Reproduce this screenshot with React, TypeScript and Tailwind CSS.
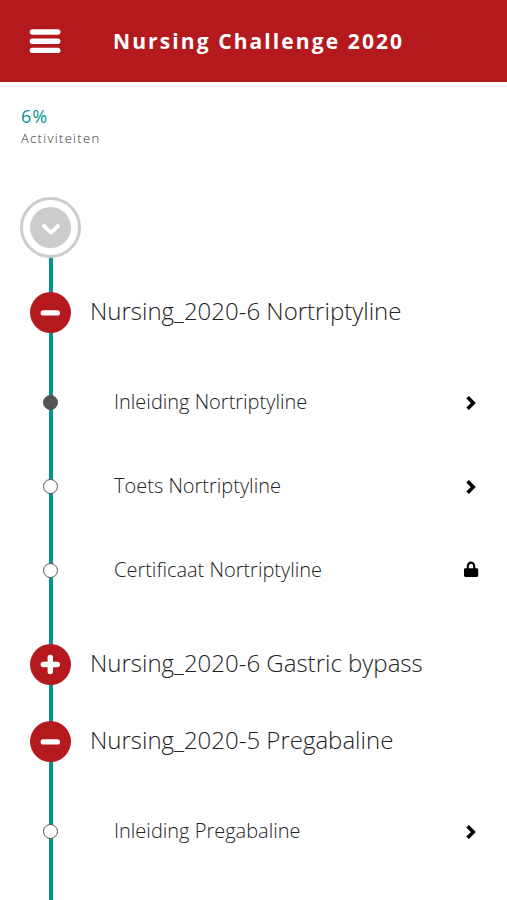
import { useState } from "react"

type ItemState = "current" | "open" | "locked"

interface Item {
  title: string
  state: ItemState
}

interface Chapter {
  title: string
  expanded: boolean
  items: Item[]
}

const initialChapters: Chapter[] = [
  {
    title: "Nursing_2020-6 Nortriptyline",
    expanded: true,
    items: [
      { title: "Inleiding Nortriptyline", state: "current" },
      { title: "Toets Nortriptyline", state: "open" },
      { title: "Certificaat Nortriptyline", state: "locked" },
    ],
  },
  { title: "Nursing_2020-6 Gastric bypass", expanded: false, items: [] },
  {
    title: "Nursing_2020-5 Pregabaline",
    expanded: true,
    items: [{ title: "Inleiding Pregabaline", state: "open" }],
  },
]

function MenuIcon() {
  return (
    <svg width="32" height="26" viewBox="0 0 32 26" stroke="white" strokeWidth="5.4" strokeLinecap="round" aria-hidden="true">
      <path d="M3.4 4h25.4M3.4 13.2h25.4M3.4 22.4h25.4" />
    </svg>
  )
}

function ToggleIcon({ expanded }: { expanded: boolean }) {
  return (
    <svg width="41" height="41" viewBox="0 0 41 41" fill="none" stroke="white" strokeWidth="5.4" strokeLinecap="round" aria-hidden="true">
      <path d={expanded ? "M13.3 20.9h14" : "M13.3 20.5h14M20.3 13.5v14"} />
    </svg>
  )
}

function ChevronIcon() {
  return (
    <svg width="16" height="18" viewBox="0 0 16 18" fill="none" stroke="black" strokeWidth="3.6" aria-hidden="true">
      <path d="M4.6 4.2l5.7 5.8-5.7 5.8" />
    </svg>
  )
}

function LockIcon() {
  return (
    <svg width="16" height="18" viewBox="0 0 16 18" aria-hidden="true">
      <path d="M4.8 9V5.4a3.2 3.8 0 0 1 6.4 0V9" fill="none" stroke="black" strokeWidth="2.1" />
      <rect x="1" y="7.2" width="14.2" height="8.8" rx="1.4" />
    </svg>
  )
}

function ItemRow({ item }: { item: Item }) {
  return (
    <li>
      <a href="#" className="flex h-[84px] items-center pr-7">
        <span className="flex w-[61px] shrink-0 justify-center">
          <span
            className={`size-[15px] rounded-full border ${
              item.state === "current" ? "border-[#555] bg-[#555]" : "border-[#555] bg-white"
            }`}
          />
        </span>
        <span className="ml-[33px] flex-1 text-xl font-light text-[#222]">{item.title}</span>
        {item.state === "locked" ? <LockIcon /> : <ChevronIcon />}
      </a>
    </li>
  )
}

export default function App() {
  const [chapters, setChapters] = useState(initialChapters)

  const toggle = (index: number) => {
    setChapters((prev) => prev.map((c, i) => (i === index ? { ...c, expanded: !c.expanded } : c)))
  }

  return (
    <div className="flex min-h-screen flex-col bg-white font-['Open_Sans',sans-serif]">
      <header className="flex h-[82px] items-center bg-[#b4191d] pl-[29px] text-white">
        <button aria-label="Menu">
          <MenuIcon />
        </button>
        <h1 className="ml-[52px] text-[21px] leading-8 font-bold tracking-widest">Nursing Challenge 2020</h1>
      </header>

      <section className="px-[21px] pt-[22px]">
        <p className="text-lg leading-6 tracking-wider text-[#05948f]">6%</p>
        <p className="text-[13px] leading-5 font-light tracking-widest text-[#333]">Activiteiten</p>
      </section>

      <main className="relative mt-[49px] flex-1 pl-5">
        {/* Timeline rail */}
        <div className="absolute top-[60px] bottom-0 left-[49px] w-1 bg-[#05948f]" />

        <div className="relative">
          <button
            aria-label="Alles inklappen"
            className="flex size-[61px] items-center justify-center rounded-full border-3 border-[#ccc] bg-white"
          >
            <span className="flex size-[41px] items-center justify-center rounded-full bg-[#ccc]">
              <svg width="20" height="14" viewBox="0 0 20 14" fill="none" stroke="white" strokeWidth="3.8" strokeLinecap="round" strokeLinejoin="round" aria-hidden="true">
                <path d="M3 5l7 6.6 7-6.6" />
              </svg>
            </span>
          </button>

          <div className="mt-4">
            {chapters.map((chapter, index) => (
              <section key={chapter.title}>
                <h2>
                  <button
                    onClick={() => toggle(index)}
                    aria-expanded={chapter.expanded}
                    className="flex h-[77px] w-full items-center text-left"
                  >
                    <span className="flex w-[61px] shrink-0 justify-center">
                      <span className="size-[41px] rounded-full bg-[#b4191d]">
                        <ToggleIcon expanded={chapter.expanded} />
                      </span>
                    </span>
                    <span className="ml-[9px] pb-[3px] text-2xl font-light text-[#222]">{chapter.title}</span>
                  </button>
                </h2>
                {chapter.expanded && chapter.items.length > 0 && (
                  <ul className="pt-[9px] pb-[14px]">
                    {chapter.items.map((item) => (
                      <ItemRow key={item.title} item={item} />
                    ))}
                  </ul>
                )}
              </section>
            ))}
          </div>
        </div>
      </main>
    </div>
  )
}
